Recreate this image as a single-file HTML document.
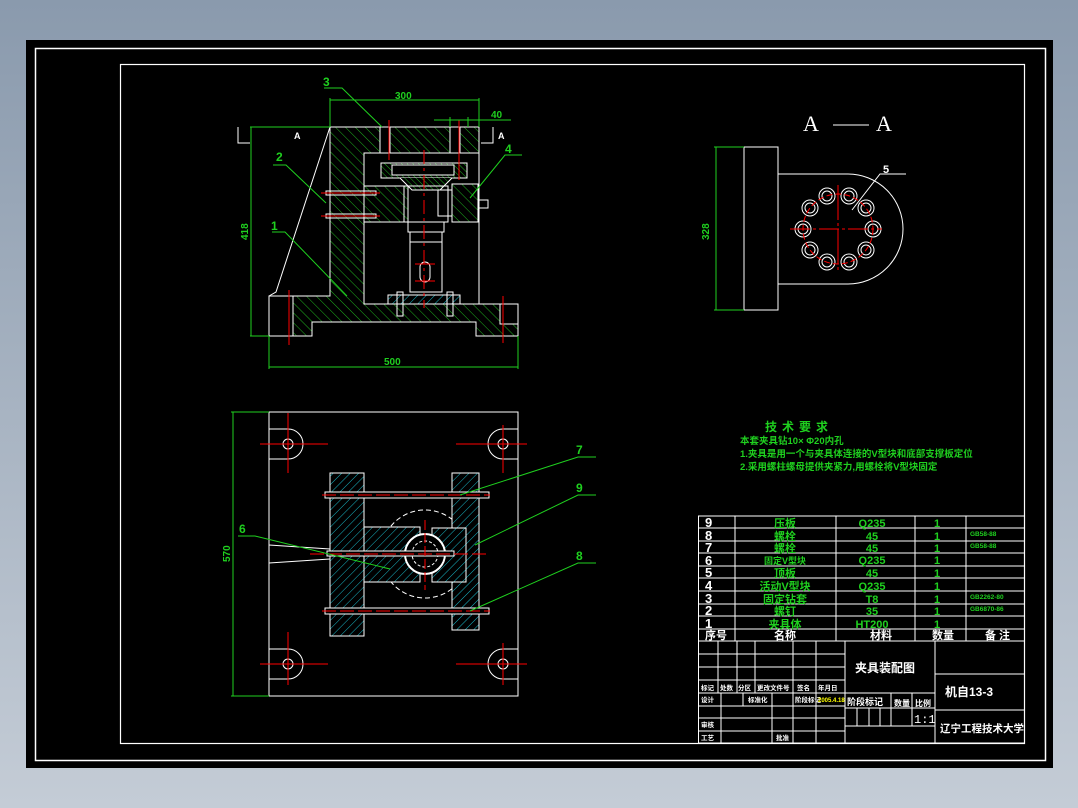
<!DOCTYPE html>
<html><head><meta charset="utf-8"><style>
html,body{margin:0;padding:0;width:1078px;height:808px;overflow:hidden;background:linear-gradient(#8a9aad,#c4ccd6);}
svg{position:absolute;left:0;top:0}
text{font-family:"Liberation Sans","Noto Sans CJK SC",sans-serif;font-weight:bold}
</style></head><body>
<svg width="1078" height="808" viewBox="0 0 1078 808" xmlns="http://www.w3.org/2000/svg">
<defs>
<pattern id="hg" width="7" height="7" patternUnits="userSpaceOnUse" patternTransform="rotate(-45)"><rect width="7" height="7" fill="#000"/><line x1="0" y1="0" x2="0" y2="7" stroke="#1fb21f" stroke-width="1"/></pattern>
<pattern id="hg2" width="4" height="4" patternUnits="userSpaceOnUse" patternTransform="rotate(-45)"><rect width="4" height="4" fill="#000"/><line x1="0" y1="0" x2="0" y2="4" stroke="#1fb21f" stroke-width="1"/></pattern>
<pattern id="hc" width="6" height="6" patternUnits="userSpaceOnUse" patternTransform="rotate(45)"><rect width="6" height="6" fill="#000"/><line x1="0" y1="0" x2="0" y2="6" stroke="#19b8c8" stroke-width="1"/></pattern>
</defs>
<rect x="26" y="40" width="1027" height="728" fill="#000"/>
<rect x="35.5" y="48.5" width="1010" height="712" fill="none" stroke="#fff" stroke-width="1.5"/>
<rect x="120.5" y="64.5" width="904" height="679" fill="none" stroke="#fff" stroke-width="1.2"/>

<!-- TOP VIEW -->
<g stroke="#fff" stroke-width="1" fill="none">
<path d="M330 127 H479 V153 H364 V304 H518 V336 H476 V322 H312 V336 H269 V296 H330 Z" fill="url(#hg)"/>
<rect x="364" y="153" width="115" height="151" fill="#000"/>
<rect x="380" y="127" width="10" height="26" fill="#000"/>
<rect x="450" y="127" width="10" height="26" fill="#000"/>
<rect x="269" y="296" width="24" height="40" fill="#000"/>
<rect x="500" y="304" width="18" height="20" fill="#000"/>
<path d="M330 127 L276 292 L269 296"/>
<rect x="364" y="186" width="44" height="36" fill="url(#hg)"/>
<path d="M381 163 H467 V178 H381 Z" fill="url(#hg2)"/>
<rect x="392" y="165" width="62" height="10" fill="#000"/>
<path d="M400 178 L412 190 H440 L452 178" fill="url(#hg2)"/>
<rect x="404" y="186" width="44" height="36"/>
<rect x="408" y="222" width="36" height="10"/>
<rect x="410" y="232" width="32" height="10"/>
<rect x="410" y="242" width="32" height="50"/>
<rect x="420" y="262" width="10" height="20" rx="5"/>
<rect x="452" y="184" width="26" height="38" fill="url(#hg)"/>
<rect x="438" y="190" width="14" height="26"/>
<rect x="478" y="200" width="10" height="8"/>
<rect x="388" y="295" width="72" height="9" fill="url(#hc)"/>
<rect x="397" y="292" width="6" height="24"/>
<rect x="447" y="292" width="6" height="24"/>
<rect x="326" y="191" width="50" height="4"/>
<rect x="326" y="214" width="50" height="4"/>
<path d="M238 127 V143 H250 M493 127 V143 H481"/>
</g>
<g stroke="#f00" stroke-width="1">
<line x1="424" y1="150" x2="424" y2="308" stroke-dasharray="14 4 3 4"/>
<line x1="289" y1="290" x2="289" y2="345"/><line x1="503" y1="296" x2="503" y2="343"/>
<line x1="389" y1="120" x2="389" y2="160"/><line x1="459" y1="120" x2="459" y2="180"/>
<line x1="321" y1="193" x2="380" y2="193"/><line x1="321" y1="216" x2="380" y2="216"/>
<line x1="415" y1="264" x2="435" y2="264"/><line x1="415" y1="281" x2="435" y2="281"/>
</g>
<g stroke="#1fd01f" stroke-width="1" fill="none">
<line x1="251" y1="127" x2="251" y2="336"/><line x1="250" y1="127" x2="330" y2="127"/><line x1="250" y1="336" x2="269" y2="336"/>
<line x1="330" y1="100" x2="479" y2="100"/><line x1="330" y1="98" x2="330" y2="127"/><line x1="479" y1="98" x2="479" y2="127"/>
<line x1="269" y1="367" x2="518" y2="367"/><line x1="269" y1="336" x2="269" y2="369"/><line x1="518" y1="336" x2="518" y2="369"/>
<line x1="434" y1="120" x2="511" y2="120"/><line x1="450" y1="117" x2="450" y2="127"/><line x1="468" y1="117" x2="468" y2="127"/>
<path d="M324 88 H342 L382 127"/><path d="M273 165 H286 L326 203"/><path d="M272 232 H285 L347 296"/><path d="M522 155 H505 L470 198"/>
</g>
<g fill="#1fd01f" font-size="12">
<text x="323" y="86">3</text><text x="276" y="161">2</text><text x="271" y="230">1</text><text x="505" y="153">4</text>
<text x="395" y="99" font-size="10">300</text><text x="491" y="118" font-size="10">40</text><text x="384" y="365" font-size="10">500</text>
<text x="248" y="240" font-size="10" transform="rotate(-90 248 240)">418</text>
</g>
<g fill="#fff" font-size="9"><text x="294" y="139">A</text><text x="498" y="139">A</text></g>

<!-- BOTTOM VIEW -->
<g stroke="#fff" stroke-width="1" fill="none">
<rect x="269" y="412" width="249" height="284"/>
<path d="M269 429 H288 A15 15 0 0 1 288 459 H269"/><circle cx="288" cy="444" r="5"/>
<path d="M518 429 H503 A15 15 0 0 0 503 459 H518"/><circle cx="503" cy="444" r="5"/>
<path d="M269 649 H288 A15 15 0 0 1 288 679 H269"/><circle cx="288" cy="664" r="5"/>
<path d="M518 649 H503 A15 15 0 0 0 503 679 H518"/><circle cx="503" cy="664" r="5"/>
<circle cx="425" cy="554" r="44" stroke-dasharray="5 3"/>
<rect x="330" y="473" width="34" height="163" fill="url(#hc)"/>
<rect x="452" y="473" width="27" height="157" fill="url(#hc)"/>
<rect x="364" y="527" width="56" height="55" fill="url(#hc)"/>
<rect x="432" y="528" width="34" height="54" fill="url(#hc)"/>
<circle cx="425" cy="554" r="20" fill="#000" stroke-width="2"/><circle cx="425" cy="554" r="13" stroke-dasharray="3 2"/>
<rect x="325" y="492" width="164" height="6" fill="#000"/>
<rect x="325" y="608" width="164" height="6" fill="#000"/>
<rect x="327" y="551" width="127" height="5" fill="#000"/>
<path d="M269 545 Q300 547 330 549 M269 563 Q300 561 330 559"/>
</g>
<g stroke="#f00" stroke-width="1">
<line x1="260" y1="444" x2="328" y2="444"/><line x1="288" y1="413" x2="288" y2="473"/>
<line x1="456" y1="444" x2="527" y2="444"/><line x1="503" y1="425" x2="503" y2="473"/>
<line x1="260" y1="664" x2="328" y2="664"/><line x1="288" y1="632" x2="288" y2="685"/>
<line x1="456" y1="664" x2="527" y2="664"/><line x1="503" y1="643" x2="503" y2="685"/>
<line x1="322" y1="495" x2="490" y2="495" stroke-dasharray="14 4"/>
<line x1="322" y1="611" x2="490" y2="611" stroke-dasharray="14 4"/>
<line x1="310" y1="554" x2="490" y2="554" stroke-dasharray="14 4"/>
<line x1="425" y1="520" x2="425" y2="590" stroke-dasharray="10 3"/>
</g>
<g stroke="#1fd01f" stroke-width="1" fill="none">
<line x1="233" y1="412" x2="233" y2="696"/><line x1="231" y1="412" x2="269" y2="412"/><line x1="231" y1="696" x2="269" y2="696"/>
<path d="M238 536 H255 L390 569"/><path d="M596 457 H578 L460 495"/><path d="M596 495 H578 L475 545"/><path d="M596 563 H578 L470 611"/>
</g>
<g fill="#1fd01f" font-size="12">
<text x="239" y="533">6</text><text x="576" y="454">7</text><text x="576" y="492">9</text><text x="576" y="560">8</text>
<text x="230" y="562" font-size="10" transform="rotate(-90 230 562)">570</text>
</g>

<!-- SECTION A-A -->
<g stroke="#fff" stroke-width="1" fill="none">
<rect x="744" y="147" width="34" height="163"/>
<path d="M778 174 H848 A55 55 0 0 1 848 284 H778"/>
<circle cx="873" cy="229" r="8"/><circle cx="873" cy="229" r="5"/>
<circle cx="866" cy="208" r="8"/><circle cx="866" cy="208" r="5"/>
<circle cx="849" cy="196" r="8"/><circle cx="849" cy="196" r="5"/>
<circle cx="827" cy="196" r="8"/><circle cx="827" cy="196" r="5"/>
<circle cx="810" cy="208" r="8"/><circle cx="810" cy="208" r="5"/>
<circle cx="803" cy="229" r="8"/><circle cx="803" cy="229" r="5"/>
<circle cx="810" cy="250" r="8"/><circle cx="810" cy="250" r="5"/>
<circle cx="827" cy="262" r="8"/><circle cx="827" cy="262" r="5"/>
<circle cx="849" cy="262" r="8"/><circle cx="849" cy="262" r="5"/>
<circle cx="866" cy="250" r="8"/><circle cx="866" cy="250" r="5"/>
<path d="M906 174 H880 L852 210"/>
<line x1="833" y1="125" x2="869" y2="125"/>
</g>
<g stroke="#f00" stroke-width="1" fill="none">
<circle cx="838" cy="229" r="35" stroke-dasharray="6 3"/>
<line x1="790" y1="229" x2="882" y2="229" stroke-dasharray="20 3 3 3"/>
<line x1="838" y1="185" x2="838" y2="273" stroke-dasharray="35 3 3 3"/>
</g>
<g stroke="#1fd01f" stroke-width="1"><line x1="716" y1="147" x2="716" y2="310"/><line x1="714" y1="147" x2="744" y2="147"/><line x1="714" y1="310" x2="744" y2="310"/></g>
<g fill="#fff"><text x="803" y="131" style="font-family:'Liberation Serif',serif;font-weight:normal;font-size:22px">A</text><text x="876" y="131" style="font-family:'Liberation Serif',serif;font-weight:normal;font-size:22px">A</text><text x="883" y="173" font-size="11">5</text></g>
<text x="709" y="240" font-size="10" fill="#1fd01f" transform="rotate(-90 709 240)">328</text>

<!-- TECH REQ -->
<g fill="#1fd01f">
<text x="765" y="431" font-size="12" letter-spacing="5">技术要求</text>
<text x="740" y="444" font-size="9.5">本套夹具钻10× Φ20内孔</text>
<text x="740" y="457" font-size="9.5">1.夹具是用一个与夹具体连接的V型块和底部支撑板定位</text>
<text x="740" y="470" font-size="9.5">2.采用螺柱螺母提供夹紧力,用螺栓将V型块固定</text>
</g>

<!-- PARTS TABLE -->
<g stroke="#fff" stroke-width="1" fill="none">
<rect x="698.5" y="516" width="326" height="227"/>
<line x1="698" y1="528" x2="1025" y2="528"/><line x1="698" y1="541" x2="1025" y2="541"/><line x1="698" y1="553" x2="1025" y2="553"/>
<line x1="698" y1="566" x2="1025" y2="566"/><line x1="698" y1="578" x2="1025" y2="578"/><line x1="698" y1="591" x2="1025" y2="591"/>
<line x1="698" y1="604" x2="1025" y2="604"/><line x1="698" y1="616" x2="1025" y2="616"/><line x1="698" y1="629" x2="1025" y2="629"/>
<line x1="698" y1="641" x2="1025" y2="641"/>
<line x1="735" y1="516" x2="735" y2="641"/><line x1="836" y1="516" x2="836" y2="641"/><line x1="915" y1="516" x2="915" y2="641"/><line x1="966" y1="516" x2="966" y2="641"/>
<line x1="845" y1="641" x2="845" y2="744"/><line x1="935" y1="641" x2="935" y2="744"/>
<line x1="698" y1="654" x2="845" y2="654"/><line x1="698" y1="667" x2="845" y2="667"/><line x1="698" y1="680" x2="845" y2="680"/><line x1="698" y1="693" x2="845" y2="693"/>
<line x1="698" y1="706" x2="845" y2="706"/><line x1="698" y1="718" x2="845" y2="718"/><line x1="698" y1="731" x2="845" y2="731"/>
<line x1="718" y1="641" x2="718" y2="693"/><line x1="737" y1="641" x2="737" y2="693"/><line x1="755" y1="641" x2="755" y2="693"/>
<line x1="793" y1="641" x2="793" y2="744"/><line x1="816" y1="641" x2="816" y2="744"/>
<line x1="721" y1="693" x2="721" y2="744"/><line x1="743" y1="693" x2="743" y2="706"/><line x1="772" y1="693" x2="772" y2="744"/>
<line x1="845" y1="693" x2="935" y2="693"/><line x1="845" y1="708" x2="935" y2="708"/><line x1="845" y1="726" x2="935" y2="726"/>
<line x1="891" y1="693" x2="891" y2="726"/><line x1="912" y1="693" x2="912" y2="726"/>
<line x1="857" y1="708" x2="857" y2="726"/><line x1="869" y1="708" x2="869" y2="726"/><line x1="880" y1="708" x2="880" y2="726"/>
<line x1="935" y1="674" x2="1025" y2="674"/><line x1="935" y1="710" x2="1025" y2="710"/>
</g>
<g fill="#fff" style="font-family:'Liberation Serif',serif;font-weight:normal;font-size:13px">
<text x="705" y="527">9</text><text x="705" y="540">8</text><text x="705" y="552">7</text><text x="705" y="565">6</text><text x="705" y="577">5</text>
<text x="705" y="590">4</text><text x="705" y="603">3</text><text x="705" y="615">2</text><text x="705" y="628">1</text>
</g>
<g fill="#1fd01f" font-size="11" text-anchor="middle">
<text x="785" y="527">压板</text><text x="785" y="540">螺栓</text><text x="785" y="552">螺栓</text><text x="785" y="564" font-size="9">固定V型块</text><text x="785" y="577">顶板</text>
<text x="785" y="590">活动V型块</text><text x="785" y="603">固定钻套</text><text x="785" y="615">螺钉</text><text x="785" y="628">夹具体</text>
<text x="872" y="527">Q235</text><text x="872" y="540">45</text><text x="872" y="552">45</text><text x="872" y="564">Q235</text><text x="872" y="577">45</text>
<text x="872" y="590">Q235</text><text x="872" y="603">T8</text><text x="872" y="615">35</text><text x="872" y="628">HT200</text>
<text x="937" y="527">1</text><text x="937" y="540">1</text><text x="937" y="552">1</text><text x="937" y="564">1</text><text x="937" y="577">1</text>
<text x="937" y="590">1</text><text x="937" y="603">1</text><text x="937" y="615">1</text><text x="937" y="628">1</text>
</g>
<g fill="#1fd01f" font-size="6.5"><text x="970" y="536">GB58-88</text><text x="970" y="548">GB58-88</text><text x="970" y="599">GB2262-80</text><text x="970" y="611">GB6870-86</text></g>
<g fill="#fff" font-size="11"><text x="705" y="639">序号</text><text x="774" y="639">名称</text><text x="870" y="639">材料</text><text x="932" y="639">数量</text><text x="985" y="639">备 注</text></g>
<g fill="#fff" font-size="6.5">
<text x="701" y="690">标记</text><text x="720" y="690">处数</text><text x="738" y="690">分区</text><text x="757" y="690">更改文件号</text><text x="797" y="690">签名</text><text x="818" y="690">年月日</text>
<text x="701" y="702">设计</text><text x="748" y="702">标准化</text><text x="795" y="702">阶段标记</text>
<text x="701" y="727">审核</text><text x="701" y="740">工艺</text><text x="776" y="740">批准</text>
</g>
<text x="818" y="702" fill="#ff0" font-size="6">2005.4.18</text>
<g fill="#fff">
<text x="855" y="672" font-size="12">夹具装配图</text>
<text x="847" y="705" font-size="9">阶段标记</text><text x="894" y="706" font-size="8">数量</text><text x="915" y="706" font-size="8">比例</text>
<text x="914" y="723" style="font-family:'Liberation Mono',monospace;font-weight:normal;font-size:12px">1:1</text>
<text x="945" y="696" font-size="12">机自13-3</text>
<text x="940" y="732" font-size="10.5">辽宁工程技术大学</text>
</g>
</svg>
</body></html>
